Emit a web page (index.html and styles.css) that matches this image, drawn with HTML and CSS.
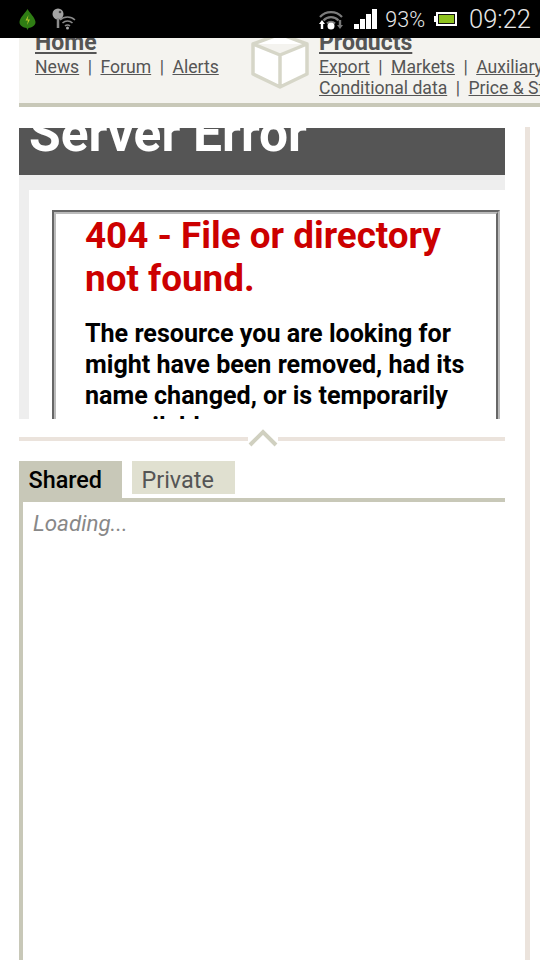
FILE: index.html
```html
<!DOCTYPE html>
<html lang="en">
	<head>
		<meta charset="utf-8">
		<title>Server Error</title>
		<link rel="stylesheet" href="styles.css">
	</head>
	<body>
		<div class="statusbar">
			<svg class="leaf" width="17" height="21" viewBox="0 0 17 21"><path d="M8.5 0C6.500 4 1 8 .5 13c0 4 4 5.500 7 6l1 2 1-2c3-.5 7-2 7-6C16 8 10.500 4 8.500 0z" fill="#2f7d14"/><path d="M9.500 6 6.500 11.500h2.500L8 16l3-5.500H8.500z" fill="#b8c82a"/></svg>
			<svg class="key" width="24" height="22" viewBox="0 0 24 22"><circle cx="6" cy="6" r="5.500" fill="#a4a4a4"/><circle cx="8" cy="4" r="1.300" fill="#444"/><path d="M6 10v10" stroke="#8c8c8c" stroke-width="2.500"/><path d="M8 12a11 11 0 0 1 15 0M10.500 15a7 7 0 0 1 10 0M13 18a3.500 3.500 0 0 1 5 0" stroke="#8a8a8a" stroke-width="1.500" fill="none"/><circle cx="15.500" cy="20" r="1.500" fill="#aaa"/></svg>
			<div class="status-right">
				<svg class="wifi" width="24" height="22" viewBox="0 0 24 22"><path d="M1 9a15 15 0 0 1 22 0M4.500 12.500a10 10 0 0 1 15 0M8 15.500a6 6 0 0 1 8 0" stroke="#7c7c7c" stroke-width="2.200" fill="none"/><circle cx="12" cy="18" r="3.500" fill="#fff"/><path d="M0 16l3-4 3 4H4.200v5H1.800v-5z" fill="#fff"/><path d="M18 17l3 4 3-4h-1.800v-5h-2.400v5z" fill="#777"/></svg>
				<svg class="signal" width="23" height="20" viewBox="0 0 23 20"><path d="M0 15h5v5H0zM6 10h5v10H6zM12 5h5v15h-5zM18 0h5v20h-5z" fill="#fff"/></svg>
				<span class="percent">93%</span>
				<svg class="battery" width="24" height="16" viewBox="0 0 24 16"><path d="M0 5h2v6H0z" fill="#fff"/><path d="M2 1h21v14H2z" fill="#fff"/><path d="M4 3h17v10H4z" fill="#111"/><path d="M5 4h15v8H5z" fill="#8fc31f"/></svg>
				<span class="clock">09:22</span>
			</div>
		</div>

		<div class="nav">
			<div class="nav-group nav-home">
				<a class="nav-title">Home</a>
				<div class="nav-links"><a>News</a><i>|</i><a>Forum</a><i>|</i><a>Alerts</a></div>
			</div>
			<svg class="cube" width="60" height="56" viewBox="0 0 60 56"><path d="M30-4 57 6v30L30 49 3 36V6zM3 6l27 11L57 6M30 17v32" fill="#fff" stroke="#d6d6c8" stroke-width="3.500" stroke-linejoin="round"/></svg>
			<div class="nav-group nav-products">
				<a class="nav-title">Products</a>
				<div class="nav-links"><a>Export</a><i>|</i><a>Markets</a><i>|</i><a>Auxiliary</a></div>
				<div class="nav-links"><a>Conditional data</a><i>|</i><a>Price &amp; Stats</a></div>
			</div>
		</div>

		<div class="main">
			<div class="column">
				<div class="frame">
					<div class="error-head"><h1>Server Error</h1></div>
					<div class="error-band">
						<div class="error-body">
							<div class="error-box">
								<h2>404 - File or directory not found.</h2>
								<h3>The resource you are looking for might have been removed, had its name changed, or is temporarily unavailable.</h3>
							</div>
						</div>
					</div>
				</div>
				<div class="splitter">
					<svg class="chevron" width="30" height="18" viewBox="0 0 30 18"><path d="M2 16 15 3l13 13" stroke="#d0d0c0" stroke-width="4" fill="none"/></svg>
				</div>
				<div class="tabs">
					<div class="tab tab-active">Shared</div>
					<div class="tab">Private</div>
				</div>
				<div class="panel">
					<em>Loading...</em>
				</div>
			</div>
			<div class="rule"></div>
		</div>
	</body>
</html>
```

FILE: styles.css
```css
html, body {
	margin: 0;
	padding: 0;
	height: 960px;
	overflow: hidden;
	background-color: #fff;
	font-family: Roboto, "Liberation Sans", sans-serif;
}
.statusbar {
	height: 38px;
	background-color: #000;
	display: flex;
	align-items: center;
	color: #e8e8e8;
	position: relative;
	z-index: 2;
}
.leaf {
	margin-left: 19px;
}
.key {
	margin-left: 16px;
}
.status-right {
	margin-left: auto;
	display: flex;
	align-items: center;
	padding-right: 9px;
}
.signal {
	margin-left: 11px;
}
.percent {
	font-size: 21.500px;
	font-weight: 300;
	margin-left: 8px;
}
.battery {
	margin-left: 9px;
}
.clock {
	font-size: 25.500px;
	font-weight: 300;
	margin-left: 11px;
}
.nav {
	margin-left: 19px;
	height: 65px;
	background-color: #f4f3ef;
	border-bottom: 4px solid #c8c8b8;
	display: flex;
	overflow: hidden;
	color: #555;
	font-size: 17.600px;
}
.nav a {
	text-decoration: underline;
}
.nav-group {
	flex: none;
	margin-top: -8px;
	white-space: nowrap;
}
.nav-home {
	margin-left: 16px;
	width: 215px;
}
.cube {
	flex: none;
}
.nav-products {
	margin-left: 9px;
}
.nav-title {
	display: block;
	font-size: 23px;
	font-weight: 700;
	line-height: 26px;
	margin-bottom: 1px;
}
.nav-links {
	line-height: 21px;
}
.nav-links i {
	font-style: normal;
	margin: 0 8.500px;
}
.main {
	display: flex;
	margin-top: 20px;
	margin-left: 19px;
}
.column {
	width: 486px;
}
.rule {
	width: 5px;
	height: 833px;
	margin-left: 20px;
	background-color: #ebe3dc;
}
.frame {
	margin-top: 1px;
	height: 291px;
	overflow: hidden;
}
.error-head {
	height: 47px;
	background-color: #555;
	overflow: hidden;
}
.error-head h1 {
	margin: -22px 0 0 10px;
	font-size: 51.500px;
	line-height: 56px;
	font-weight: 700;
	color: #fff;
}
.error-band {
	background-color: #eee;
	padding: 15px 0 0 10px;
}
.error-body {
	background-color: #fff;
	padding: 20px 5px 0 23px;
}
.error-box {
	border: 4px groove #bbb;
	padding: 0 28px 0 29px;
}
.error-box h2 {
	margin: 0;
	font-size: 36.800px;
	line-height: 43px;
	font-weight: 700;
	color: #c00;
}
.error-box h3 {
	margin: 18px 0 0 0;
	font-size: 25.100px;
	line-height: 31px;
	font-weight: 700;
	color: #000;
}
.splitter {
	position: relative;
	margin-top: 18px;
	height: 4px;
	background-color: #ebe3dc;
}
.chevron {
	position: absolute;
	left: 229px;
	top: -8px;
	background-color: #fff;
}
.tabs {
	display: flex;
	gap: 10px;
	margin-top: 20px;
	align-items: flex-start;
}
.tab {
	width: 103px;
	height: 33px;
	box-sizing: border-box;
	padding-left: 9.500px;
	font-size: 23.400px;
	line-height: 39px;
	overflow: hidden;
	background-color: #e0e0d0;
	color: #555;
}
.tab-active {
	height: 37px;
	font-weight: 500;
	background-color: #c8c8b8;
	color: #000;
}
.panel {
	border-top: 4px solid #c8c8b8;
	border-left: 4px solid #c8c8b8;
	height: 458px;
	padding: 7px 0 0 10px;
	font-size: 22.400px;
	line-height: 28px;
	color: #888;
}
```
